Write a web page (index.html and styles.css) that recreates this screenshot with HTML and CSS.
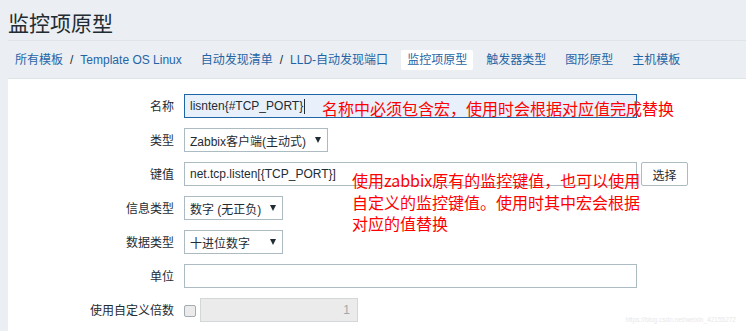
FILE: index.html
```html
<!DOCTYPE html>
<html lang="zh">
<head>
<meta charset="utf-8">
<title>监控项原型</title>
<link rel="stylesheet" href="styles.css">
</head>
<body>
<div class="page">
  <header class="header">
    <h1 class="title">监控项原型</h1>
  </header>
  <nav class="nav">
    <ul class="nav-list">
      <li class="nav-item crumb"><a class="link">所有模板</a><span class="sep">/</span><a class="link">Template OS Linux</a></li>
      <li class="nav-item crumb"><a class="link">自动发现清单</a><span class="sep">/</span><a class="link">LLD-自动发现端口</a></li>
      <li class="nav-item active"><a class="link">监控项原型</a></li>
      <li class="nav-item"><a class="link">触发器类型</a></li>
      <li class="nav-item"><a class="link">图形原型</a></li>
      <li class="nav-item"><a class="link">主机模板</a></li>
    </ul>
  </nav>
  <main class="panel">
    <div class="form">
      <label class="label">名称</label>
      <div class="field"><div class="input wide focused">lisnten{#TCP_PORT}<span class="caret"></span></div></div>

      <label class="label">类型</label>
      <div class="field"><div class="select sel-type"><span>Zabbix客户端(主动式)</span><span class="arrow"></span></div></div>

      <label class="label">键值</label>
      <div class="field"><div class="input wide">net.tcp.listen[{TCP_PORT}]</div><button class="btn">选择</button></div>

      <label class="label">信息类型</label>
      <div class="field"><div class="select sel-small"><span>数字 (无正负)</span><span class="arrow"></span></div></div>

      <label class="label">数据类型</label>
      <div class="field"><div class="select sel-small"><span>十进位数字</span><span class="arrow"></span></div></div>

      <label class="label">单位</label>
      <div class="field"><div class="input wide"></div></div>

      <label class="label">使用自定义倍数</label>
      <div class="field"><span class="checkbox"></span><div class="input multiplier">1</div></div>
    </div>

    <div class="note note-name">名称中必须包含宏，使用时会根据对应值完成替换</div>
    <div class="note note-key">
      <div class="note-line">使用zabbix原有的监控键值，也可以使用</div>
      <div class="note-line">自定义的监控键值。使用时其中宏会根据</div>
      <div class="note-line">对应的值替换</div>
    </div>
    <div class="watermark">https://blog.csdn.net/weixin_42155272</div>
  </main>
</div>
</body>
</html>
```
FILE: styles.css
```css
html, body {
  margin: 0;
  padding: 0;
  background: #ebeef2;
  font-family: "Liberation Sans", "Noto Sans CJK SC", sans-serif;
  font-size: 12px;
  color: #1f2c33;
  overflow: hidden;
}

.page {
  padding-left: 8px;
  height: 331px;
  display: flex;
  flex-direction: column;
}

.header {
  height: 40px;
  border-bottom: 1px solid #dfe4e7;
  display: flex;
  align-items: center;
}

.title {
  margin: 0;
  font-family: "Noto Sans CJK SC", sans-serif;
  font-weight: 400;
  font-size: 21px;
  line-height: 24px;
  color: #1f2c33;
  position: relative;
  top: 2px;
}

.nav {
  height: 37px;
  border-bottom: 1px solid #dfe4e7;
  display: flex;
  align-items: center;
}

.nav-list {
  list-style: none;
  margin: 0;
  padding: 0 0 0 1px;
  display: flex;
  align-items: center;
}

.nav-item {
  padding: 0 6px;
  margin-right: 7px;
  height: 20px;
  display: flex;
  align-items: center;
  border-radius: 2px;
}

.nav-item.active {
  background: #ffffff;
}

.link {
  color: #1f65a6;
  font-family: "Liberation Sans", "Noto Sans CJK SC", sans-serif;
  font-size: 12px;
  line-height: 20px;
  white-space: nowrap;
}

.sep {
  color: #1f2c33;
  padding: 0 7px;
  font-size: 12px;
}

.panel {
  flex: 1;
  background: #ffffff;
  position: relative;
  padding-top: 15px;
}

.form {
  display: grid;
  grid-template-columns: 166px 1fr;
  column-gap: 10px;
  row-gap: 10px;
  grid-auto-rows: 24px;
}

.label {
  text-align: right;
  font-family: "Noto Sans CJK SC", sans-serif;
  font-size: 12px;
  color: #1f2c33;
  display: flex;
  align-items: center;
  justify-content: flex-end;
  line-height: 16px;
}

.field {
  display: flex;
  align-items: center;
  gap: 4px;
}

.input {
  box-sizing: border-box;
  height: 24px;
  border: 1px solid #acbbc2;
  background: #ffffff;
  padding: 0 5px;
  display: flex;
  align-items: center;
  font-size: 12px;
  color: #1f2c33;
  white-space: nowrap;
}

.input.wide {
  width: 453px;
}

.input.focused {
  border-color: #1f65a6;
  background: #e8f0fb;
}

.caret {
  display: inline-block;
  width: 1px;
  height: 15px;
  background: #1f2c33;
  margin-left: 1px;
}

.select {
  box-sizing: border-box;
  height: 24px;
  border: 1px solid #acbbc2;
  background: #ffffff;
  padding: 0 6px 0 5px;
  display: flex;
  align-items: center;
  justify-content: space-between;
  font-size: 12px;
  color: #1f2c33;
  white-space: nowrap;
}

.sel-type {
  width: 144px;
}

.sel-small {
  width: 99px;
}

.arrow {
  width: 0;
  height: 0;
  border-left: 3px solid transparent;
  border-right: 3px solid transparent;
  border-top: 6px solid #1f2c33;
  margin-bottom: 1px;
}

.btn {
  box-sizing: border-box;
  height: 24px;
  width: 47px;
  border: 1px solid #acbbc2;
  border-radius: 2px;
  background: #ffffff;
  font-family: "Noto Sans CJK SC", sans-serif;
  font-size: 12px;
  color: #1f2c33;
  padding: 0;
}

.checkbox {
  box-sizing: border-box;
  width: 12px;
  height: 12px;
  border: 1px solid #a3adb3;
  border-radius: 2px;
  background: #ebebeb;
  margin-top: 1px;
}

.multiplier {
  width: 158px;
  background: #ebebeb;
  border-color: #d2d7da;
  justify-content: flex-end;
  color: #a0a7ab;
  padding-right: 7px;
}

.note {
  position: absolute;
  color: #ff0000;
  font-family: "Noto Sans CJK SC", sans-serif;
  white-space: nowrap;
}

.note-name {
  left: 314px;
  top: 19px;
  font-size: 16px;
  line-height: 20px;
}

.note-key {
  left: 344px;
  top: 91px;
  font-size: 16px;
  display: flex;
  flex-direction: column;
  gap: 1.5px;
}

.note-line {
  line-height: 20px;
  height: 20px;
}

.watermark {
  position: absolute;
  right: 10px;
  bottom: 8px;
  font-size: 6.5px;
  color: #e8e8e8;
  font-family: "Liberation Sans", sans-serif;
}
```
